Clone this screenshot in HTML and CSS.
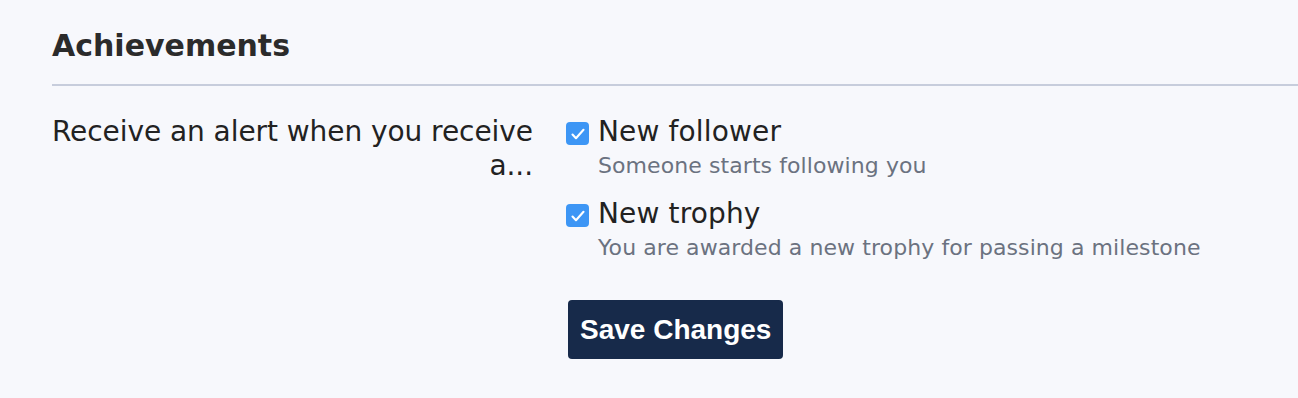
FILE: index.html
```html
<!DOCTYPE html>
<html lang="en">
<head>
<meta charset="utf-8">
<title>Achievements</title>
<link rel="stylesheet" href="styles.css">
</head>
<body>
<section class="panel">
  <h2 class="panel-title">Achievements</h2>
  <div class="form-row">
    <div class="form-label">Receive an alert when you receive a...</div>
    <div class="form-controls">
      <label class="option">
        <span class="check"><svg viewBox="0 0 24 24" width="22" height="22"><path d="M6 12.6l3.8 4L18 7.4" fill="none" stroke="#fff" stroke-width="2.3" stroke-linecap="round" stroke-linejoin="round"/></svg></span>
        <span class="option-text">
          <span class="option-name">New follower</span>
          <span class="option-hint">Someone starts following you</span>
        </span>
      </label>
      <label class="option">
        <span class="check"><svg viewBox="0 0 24 24" width="22" height="22"><path d="M6 12.6l3.8 4L18 7.4" fill="none" stroke="#fff" stroke-width="2.3" stroke-linecap="round" stroke-linejoin="round"/></svg></span>
        <span class="option-text">
          <span class="option-name">New trophy</span>
          <span class="option-hint">You are awarded a new trophy for passing a milestone</span>
        </span>
      </label>
      <div class="actions">
        <button class="btn-primary" type="button">Save Changes</button>
      </div>
    </div>
  </div>
</section>
</body>
</html>
```
FILE: styles.css
```css
html, body {
  margin: 0;
  padding: 0;
  background: #f7f8fc;
}
body {
  font-family: "DejaVu Sans", Verdana, sans-serif;
  color: #222222;
}
.panel {
  padding: 26px 0 0 52px;
}
.panel-title {
  margin: 0;
  font-size: 30px;
  font-weight: bold;
  line-height: 40px;
  color: #2b2b2b;
  padding-bottom: 18px;
  border-bottom: 2px solid #c7cddc;
}
.form-row {
  display: grid;
  grid-template-columns: 501px 1fr;
  column-gap: 33px;
  margin-left: -20px;
  padding-top: 29px;
}
.form-label {
  text-align: right;
  font-size: 28px;
  line-height: 34px;
  letter-spacing: -0.06px;
  color: #222222;
}
.form-controls {
  display: flex;
  flex-direction: column;
}
.option {
  display: flex;
  align-items: flex-start;
  gap: 9px;
  margin-bottom: 14px;
}
.check {
  flex: none;
  width: 23px;
  height: 23px;
  margin-top: 7px;
  border-radius: 4px;
  background: #3d96f5;
  display: flex;
  align-items: center;
  justify-content: center;
}
.option-text {
  display: flex;
  flex-direction: column;
}
.option-name {
  font-size: 28px;
  line-height: 34px;
  letter-spacing: 0.15px;
  color: #222222;
}
.option-hint {
  font-size: 22px;
  line-height: 34px;
  letter-spacing: 0.08px;
  color: #6b7280;
}
.actions {
  padding-top: 21px;
  padding-left: 2px;
}
.btn-primary {
  font-family: "Liberation Sans", Arial, sans-serif;
  font-weight: bold;
  font-size: 28px;
  color: #ffffff;
  background: #172a4a;
  border: none;
  border-radius: 4px;
  height: 59px;
  padding: 0 12px;
  cursor: pointer;
}
```
